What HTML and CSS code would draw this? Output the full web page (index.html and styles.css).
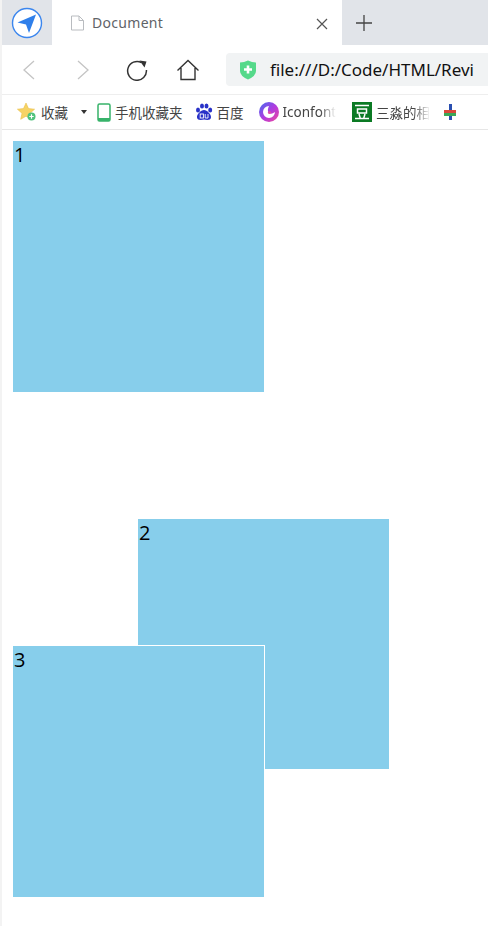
FILE: index.html
```html
<!DOCTYPE html>
<html lang="en">
<head>
    <meta charset="UTF-8">
    <meta name="viewport" content="width=device-width, initial-scale=1.0">
    <title>Document</title>
    <link rel="stylesheet" href="styles.css">
</head>
<body>
    <!-- Browser tab strip -->
    <div class="tabs">
        <div class="logo-tab">
            <svg width="32" height="32" viewBox="0 0 32 32">
                <circle cx="16" cy="16" r="14.5" fill="#fff" stroke="#3b86ee" stroke-width="1.4"/>
                <path d="M6.5 15.5 L25 7.5 L18 26 L15 17.5 Z" fill="#2f7fea"/>
            </svg>
        </div>
        <div class="tab">
            <svg class="page-icon" width="15" height="16" viewBox="0 0 15 16">
                <path d="M1.5 1 H9 L13.5 5.5 V15 H1.5 Z M9 1 V5.5 H13.5" fill="#fff" stroke="#b9bcc0"/>
            </svg>
            <span class="tab-title">Document</span>
            <svg class="tab-close" width="12" height="12" viewBox="0 0 12 12">
                <path d="M1 1 L11 11 M11 1 L1 11" stroke="#555" stroke-width="1.2"/>
            </svg>
        </div>
        <div class="new-tab">
            <svg width="16" height="16" viewBox="0 0 16 16">
                <path d="M8 0 V16 M0 8 H16" stroke="#444" stroke-width="1.3"/>
            </svg>
        </div>
    </div>

    <!-- Navigation bar -->
    <div class="toolbar">
        <svg class="nav-back" width="14" height="20" viewBox="0 0 14 20">
            <path d="M12 1 L2 10 L12 19" fill="none" stroke="#c4c4c4" stroke-width="1.3"/>
        </svg>
        <svg class="nav-forward" width="14" height="20" viewBox="0 0 14 20">
            <path d="M2 1 L12 10 L2 19" fill="none" stroke="#c4c4c4" stroke-width="1.3"/>
        </svg>
        <svg class="nav-reload" width="22" height="22" viewBox="0 0 22 22">
            <path d="M15.5 3.6 A9.4 9.4 0 1 0 20.4 11" fill="none" stroke="#333" stroke-width="1.5"/>
            <path d="M13.5 1.5 L20.5 2.5 L18.5 8.5 Z" fill="#333"/>
        </svg>
        <svg class="nav-home" width="24" height="22" viewBox="0 0 24 22">
            <path d="M1.5 11.5 L12 1.5 L22.5 11.5 M5 9 V20.5 H19 V9" fill="none" stroke="#333" stroke-width="1.4"/>
        </svg>
        <div class="address">
            <svg width="18" height="20" viewBox="0 0 18 20">
                <path d="M1 2.5 Q5 2.5 9 0.5 Q13 2.5 17 2.5 V11 Q17 16 9 19.5 Q1 16 1 11 Z" fill="#55d98a"/>
                <path d="M9 5.5 V13.5 M5 9.5 H13" stroke="#fff" stroke-width="2.6"/>
            </svg>
            <span class="url">file:///D:/Code/HTML/Revi</span>
        </div>
    </div>

    <!-- Bookmarks -->
    <div class="bookmarks">
        <div class="mark mark-fav">
            <svg width="20" height="20" viewBox="0 0 20 20">
                <path d="M9 1 L11.5 6.6 L17.6 7.2 L13 11.3 L14.3 17.3 L9 14.2 L3.7 17.3 L5 11.3 L0.4 7.2 L6.5 6.6 Z" fill="#f6d365" stroke="#e9bf4c" stroke-width=".6"/>
                <circle cx="14.5" cy="14.5" r="4" fill="#4fc27c"/>
                <path d="M14.5 12.3 V16.7 M12.3 14.5 H16.7" stroke="#fff" stroke-width="1.2"/>
            </svg>
            <span>收藏</span>
        </div>
        <span class="caret"></span>
        <div class="mark mark-mobile">
            <svg width="14" height="19" viewBox="0 0 14 19">
                <rect x="1" y="1" width="12" height="17" rx="1.5" fill="#fff" stroke="#37b36a" stroke-width="1.5"/>
                <rect x="1" y="15" width="12" height="3" fill="#37b36a"/>
            </svg>
            <span>手机收藏夹</span>
        </div>
        <div class="mark mark-baidu">
            <svg width="18" height="18" viewBox="0 0 18 18">
                <ellipse cx="3" cy="7" rx="2" ry="2.6" fill="#2932c8"/>
                <ellipse cx="7" cy="3" rx="2" ry="2.6" fill="#2932c8"/>
                <ellipse cx="11.5" cy="3" rx="2" ry="2.6" fill="#2932c8"/>
                <ellipse cx="15.2" cy="7" rx="2" ry="2.6" fill="#2932c8"/>
                <path d="M9 7 C12 7 16.5 11.5 16 14.5 C15.5 17.5 12 17 9 16.5 C6 17 2.5 17.5 2 14.5 C1.5 11.5 6 7 9 7 Z" fill="#2932c8"/>
                <rect x="5.2" y="11" width="3.2" height="4" fill="none" stroke="#fff" stroke-width=".9"/>
                <path d="M10.2 11 V15 H13 V11" fill="none" stroke="#fff" stroke-width=".9"/>
            </svg>
            <span>百度</span>
        </div>
        <div class="mark mark-iconfont">
            <svg width="20" height="20" viewBox="0 0 20 20">
                <defs>
                    <linearGradient id="iconfont-grad" x1="0" y1="0" x2="1" y2="1">
                        <stop offset="0" stop-color="#3f6df0"/>
                        <stop offset=".5" stop-color="#b03be0"/>
                        <stop offset="1" stop-color="#f0489a"/>
                    </linearGradient>
                </defs>
                <circle cx="10" cy="10" r="10" fill="url(#iconfont-grad)"/>
                <path d="M10 4 A6 6 0 1 0 16 10 Q12 13 9.5 10.5 Q8 8 10 4 Z" fill="#fff"/>
                <circle cx="10.5" cy="10.5" r="1.6" fill="#e04aa8"/>
            </svg>
            <span class="fade">Iconfont</span>
        </div>
        <div class="mark mark-douban">
            <svg width="20" height="20" viewBox="0 0 20 20">
                <rect width="20" height="20" fill="#0b7a24"/>
                <path d="M3 3.5 H17 M5.5 7 H14.5 V11 H5.5 Z M3 16.5 H17 M7 12 L8.2 16 M13 12 L11.8 16" fill="none" stroke="#fff" stroke-width="1.5"/>
            </svg>
            <span class="fade">三淼的相</span>
        </div>
        <svg class="mark-last" width="12" height="20" viewBox="0 0 12 20">
            <rect x="5" y="2" width="3" height="8" fill="#2a4fb0"/>
            <rect x="0" y="8" width="12" height="3" fill="#d9483b"/>
            <rect x="0" y="11" width="12" height="3" fill="#3aa757"/>
            <rect x="5" y="14" width="3" height="4" fill="#2a4fb0"/>
        </svg>
    </div>

    <!-- Page content -->
    <div class="content">
        <div class="box box-one">1</div>
        <div class="box box-two">2</div>
        <div class="box box-three">3</div>
    </div>
</body>
</html>
```

FILE: styles.css
```css
html, body {
    margin: 0;
    padding: 0;
    height: 926px;
    overflow: hidden;
    background: #fff;
}

body {
    font-family: "Noto Sans", "Noto Sans CJK SC", sans-serif;
    border-left: 2px solid #f3f3f3;
    box-sizing: border-box;
}

/* Tab strip */
.tabs {
    display: flex;
    height: 45px;
    background: #e1e4e9;
}

.logo-tab {
    width: 50px;
    display: flex;
    align-items: center;
    justify-content: center;
    padding-right: 0;
}

.tab {
    width: 290px;
    background: #fff;
    display: flex;
    align-items: center;
    box-sizing: border-box;
    padding: 0 14px 0 18px;
    gap: 7px;
}

.tab-title {
    font-size: 14px;
    color: #5f6368;
    letter-spacing: .3px;
    flex: 1;
}

.tab-close {
    margin-top: 3px;
}

.new-tab {
    width: 44px;
    display: flex;
    align-items: center;
    justify-content: center;
}

/* Navigation bar */
.toolbar {
    display: flex;
    align-items: center;
    height: 49px;
    padding-left: 20px;
    box-sizing: border-box;
}

.nav-forward {
    margin-left: 40px;
}

.nav-reload {
    margin-left: 36px;
}

.nav-home {
    margin-left: 28px;
}

.address {
    margin-left: 26px;
    flex: 1;
    height: 33px;
    background: #f1f3f4;
    border-radius: 4px 0 0 4px;
    display: flex;
    align-items: center;
    padding-left: 13px;
    gap: 13px;
    overflow: hidden;
    white-space: nowrap;
}

.url {
    font-size: 17px;
    color: #111;
}

/* Bookmarks */
.bookmarks {
    display: flex;
    align-items: center;
    height: 36px;
    padding-left: 15px;
    box-sizing: border-box;
    border-top: 1px solid #eee;
    border-bottom: 1px solid #e6e6e6;
    font-size: 13.5px;
    color: #444;
    overflow: hidden;
    white-space: nowrap;
}

.mark {
    display: flex;
    align-items: center;
    gap: 4px;
    flex: none;
}

.caret {
    width: 0;
    height: 0;
    margin-left: 13px;
    border: 3px solid transparent;
    border-top: 4px solid #333;
    border-bottom: 0;
}

.mark-mobile {
    margin-left: 10px;
}

.mark-baidu {
    margin-left: 12px;
}

.mark-iconfont {
    margin-left: 15px;
}

.mark-douban {
    margin-left: 16px;
}

.mark-last {
    margin-left: 14px;
    flex: none;
}

.fade {
    -webkit-mask-image: linear-gradient(to right, #000 70%, transparent);
    mask-image: linear-gradient(to right, #000 70%, transparent);
}

/* Page content */
.content {
    padding: 11px 0 0 11px;
}

.box {
    width: 251px;
    height: 251px;
    background: #87ceeb;
    font-size: 20px;
    line-height: 28px;
    color: #000;
    font-family: "Open Sans", "Noto Sans", sans-serif;
    padding-left: 1px;
    box-sizing: border-box;
}

.box-two {
    height: 250px;
    margin-top: 127px;
    margin-left: 125px;
}

.box-three {
    margin-top: -123px;
    box-shadow: 1px -1px 0 #fff;
}
```
